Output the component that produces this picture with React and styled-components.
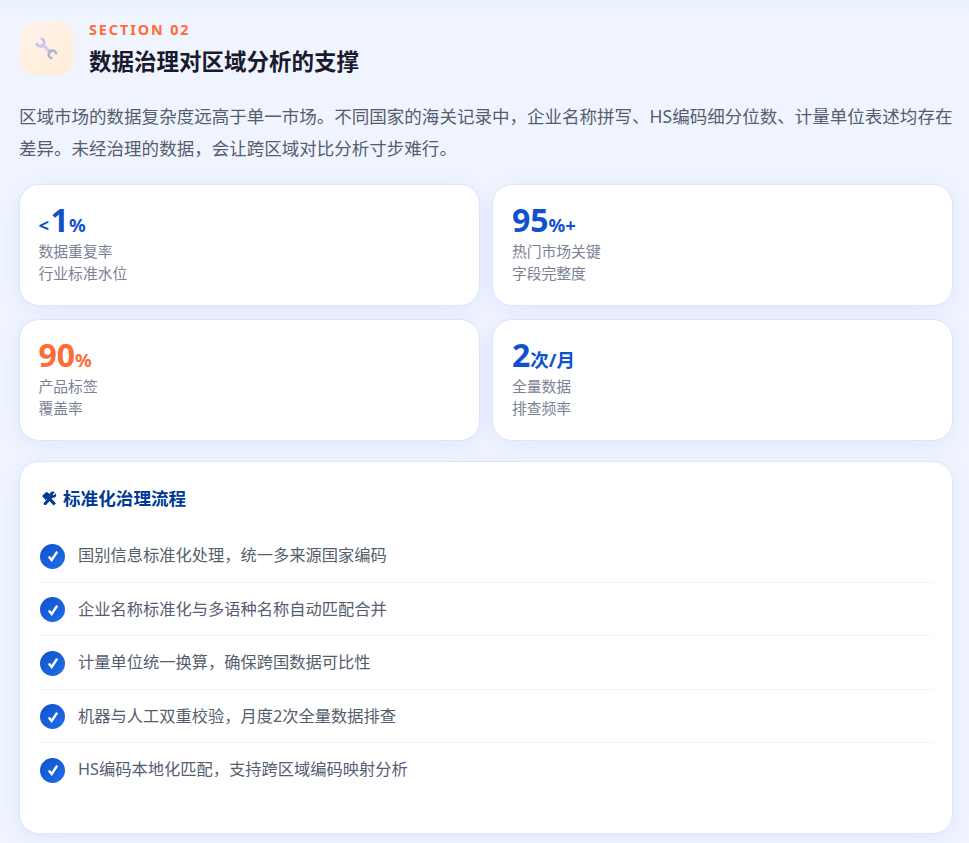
import React from 'react';
import styled, { createGlobalStyle } from 'styled-components';

const Global = createGlobalStyle`
  * { box-sizing: border-box; }
  html, body { margin: 0; padding: 0; }
  body {
    background: #f0f4ff;
    font-family: "Noto Sans", "Noto Sans CJK SC", sans-serif;
  }
`;

const Page = styled.div`
  width: 969px;
  height: 843px;
  overflow: hidden;
  padding: 21px 16px 9px 19px;
  background: linear-gradient(180deg, #e9f0fd 0, #ebf1fe 10px, #f0f4ff 18px, #f0f4ff 100%);
`;
const Header = styled.header`
  display: flex;
  align-items: flex-start;
  gap: 16px;
  height: 55px;
`;
const IconBox = styled.div`
  width: 54px;
  height: 54px;
  border-radius: 15px;
  background: linear-gradient(135deg, #fff3ec, #ffecd6);
  display: flex;
  align-items: center;
  justify-content: center;
  flex: none;
`;
const HeaderText = styled.div`
  display: flex;
  flex-direction: column;
`;
const Eyebrow = styled.div`
  font-size: 14.4px;
  line-height: 18px;
  font-weight: 700;
  letter-spacing: 1.9px;
  color: #ff6b35;
`;
const Title = styled.h1`
  margin: 8px 0 0;
  font-size: 22.5px;
  line-height: 30px;
  font-weight: 700;
  color: #1a1a2e;
`;
const Lead = styled.p`
  margin: 24px 0 0;
  font-size: 17.53px;
  line-height: 32px;
  color: #555e6e;
`;
const StatGrid = styled.div`
  display: grid;
  grid-template-columns: 1fr 1fr;
  gap: 13px 12.8px;
  margin-top: 20px;
`;
const Stat = styled.div`
  height: 122px;
  padding: 19.5px 18.5px 0;
  background: #fff;
  border: 1px solid #dce6fb;
  border-radius: 20px;
  box-shadow: 0 4px 20px rgba(26, 95, 224, 0.08);
`;
const StatValue = styled.div`
  color: ${p => (p.$accent ? '#ff6b35' : '#0f52cc')};
  font-weight: 700;
  font-size: 32px;
  line-height: 30px;
`;
const Unit = styled.span`
  font-size: 18.5px;
`;
const Prefix = styled(Unit)`
  margin-right: 1.5px;
`;
const StatLabel = styled.div`
  font-size: 14.8px;
  line-height: 22.6px;
  color: #7a8294;
`;
const Panel = styled.section`
  height: 373px;
  margin-top: 20px;
  padding: 23px 20px;
  background: #fff;
  border: 1px solid #dce6fb;
  border-radius: 20px;
  box-shadow: 0 4px 20px rgba(26, 95, 224, 0.08);
`;
const PanelTitle = styled.h2`
  margin: 0 0 18px;
  display: flex;
  align-items: center;
  gap: 6px;
  font-size: 17.6px;
  line-height: 26px;
  font-weight: 700;
  color: #003a96;
`;
const ToolsIcon = styled.svg`
  margin-left: 1px;
  flex: none;
`;
const Steps = styled.ul`
  list-style: none;
  margin: 0;
  padding: 0;
`;
const Step = styled.li`
  display: flex;
  align-items: center;
  gap: 13px;
  height: 53.5px;
  font-size: 16.25px;
  color: #555e6e;
  border-bottom: 1px solid ${p => (p.$last ? 'transparent' : '#f0f4ff')};
`;
const StepText = styled.span`
  padding-bottom: 2px;
`;
const Check = styled.span`
  width: 25px;
  height: 25px;
  margin-top: 2px;
  border-radius: 50%;
  background: linear-gradient(135deg, #0f52cc, #1f6fe8);
  display: flex;
  align-items: center;
  justify-content: center;
  flex: none;
`;

const Wrench = () => (
  <svg width="27" height="27" viewBox="0 0 30 30" fill="none">
    <g transform="rotate(-45 15 15)">
      <path d="M15 7.5 L15 22.5" stroke="#d4ceee" strokeWidth="3.8" />
      <path d="M12 1.2 A4.2 4.2 0 1 0 18 1.2" stroke="#c9c3e6" strokeWidth="2.8" transform="translate(0 1.6)" />
      <path d="M12 28.8 A4.2 4.2 0 1 1 18 28.8" stroke="#aeb0cc" strokeWidth="2.8" transform="translate(0 -1.6)" />
    </g>
  </svg>
);
const Tools = () => (
  <ToolsIcon width="16" height="15" viewBox="0 0 24 24" fill="#003a96" stroke="none">
    <path d="M1 8 L8 1 L15 6 L12.6 8.6 L23 19.4 L19.6 23 L9 12.2 L6.6 14.4 Z" />
    <path d="M14.6 1.8 C17 0.2 20 0.6 21.6 1.8 L18 5.2 L19.4 7 L23 3.6 C24 6 23.6 9 21.2 10.4 C19.8 11.2 18.4 11 17.4 10.6 L7.6 21.8 C5.8 23.8 2.2 21 3.8 18.6 L14 7.2 C13.2 5.4 13.4 3 14.6 1.8 Z" />
  </ToolsIcon>
);
const Tick = () => (
  <svg width="12" height="12" viewBox="0 0 12 12" fill="none" stroke="#fff" strokeWidth="2.4">
    <path d="M1.8 6.4 L4.7 10 L10.2 1.6" />
  </svg>
);

const stats = [
  { pre: '<', num: '1', unit: '%', a: '数据重复率', b: '行业标准水位' },
  { num: '95', unit: '%+', a: '热门市场关键', b: '字段完整度' },
  { num: '90', unit: '%', a: '产品标签', b: '覆盖率', accent: true },
  { num: '2', unit: '次/月', a: '全量数据', b: '排查频率' },
];
const steps = [
  '国别信息标准化处理，统一多来源国家编码',
  '企业名称标准化与多语种名称自动匹配合并',
  '计量单位统一换算，确保跨国数据可比性',
  '机器与人工双重校验，月度2次全量数据排查',
  'HS编码本地化匹配，支持跨区域编码映射分析',
];

export default function App() {
  return (
    <Page>
      <Global />
      <Header>
        <IconBox><Wrench /></IconBox>
        <HeaderText>
          <Eyebrow>SECTION 02</Eyebrow>
          <Title>数据治理对区域分析的支撑</Title>
        </HeaderText>
      </Header>
      <Lead>区域市场的数据复杂度远高于单一市场。不同国家的海关记录中，企业名称拼写、HS编码细分位数、计量单位表述均存在差异。未经治理的数据，会让跨区域对比分析寸步难行。</Lead>
      <StatGrid>
        {stats.map(s => (
          <Stat key={s.a}>
            <StatValue $accent={s.accent}>
              {s.pre && <Prefix>{s.pre}</Prefix>}{s.num}<Unit>{s.unit}</Unit>
            </StatValue>
            <StatLabel>{s.a}<br />{s.b}</StatLabel>
          </Stat>
        ))}
      </StatGrid>
      <Panel>
        <PanelTitle><Tools />标准化治理流程</PanelTitle>
        <Steps>
          {steps.map((t, i) => (
            <Step key={t} $last={i === steps.length - 1}>
              <Check><Tick /></Check>
              <StepText>{t}</StepText>
            </Step>
          ))}
        </Steps>
      </Panel>
    </Page>
  );
}
